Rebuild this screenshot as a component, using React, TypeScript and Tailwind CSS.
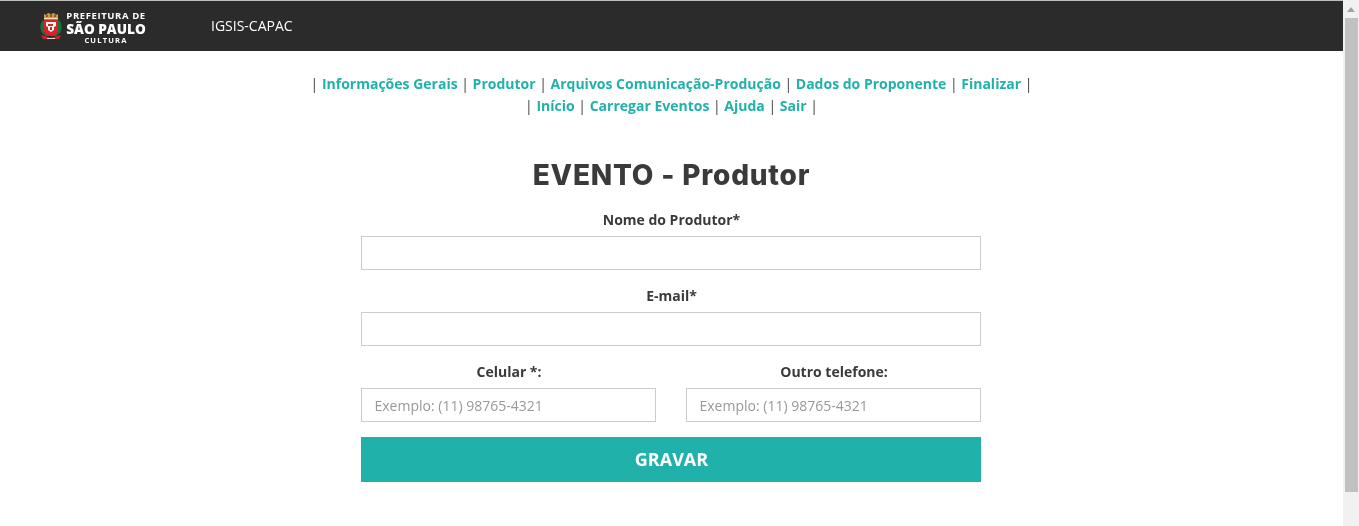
import React from 'react';

const tabs = ['Informações Gerais', 'Produtor', 'Arquivos Comunicação-Produção', 'Dados do Proponente', 'Finalizar'];
const links = ['Início', 'Carregar Eventos', 'Ajuda', 'Sair'];

const NavRow = ({ items }: { items: string[] }) => (
  <p className="h-[22px] leading-[22px]">
    |{' '}
    {items.map((item) => (
      <React.Fragment key={item}>
        <a className="font-bold text-[#20b2aa]">{item}</a> |{' '}
      </React.Fragment>
    ))}
  </p>
);

// brasao simplificado: coroa, ramos verdes, escudo vermelho e fita
const Crest = () => (
  <svg width="22" height="28" viewBox="0 0 22 28" className="shrink-0">
    <path d="M4 7V2l2 1 2-2 3 1 3-1 2 2 2-1v5z" fill="#c9a23f" />
    <path d="M6 3h2v2H6zM10 2h2v3h-2zM14 3h2v2h-2z" fill="#8f5a22" />
    <path d="M4 6h14v1.500H4z" fill="#efe3b0" />
    <path d="M3 8C0 11-.5 17 2 21l4 3h10l4-3c2.500-4 2-10-1-13l-1 1v12H4V9z" fill="#17733a" />
    <path d="M4 8h14v11c0 2.500-3 4-7 5-4-1-7-2.500-7-5z" fill="#d9222a" />
    <path d="M6 10h10v4l-2 1v3l-3 2-3-2v-3l-2-1z" fill="#f5f5f5" />
    <path d="M8 12h5v2H8zM10 15h2v3h-2z" fill="#d9222a" />
    <path d="M1 23l4 1 6 2 6-2 4-1-2 4H3z" fill="#c9242b" />
    <path d="M7 26h8v1H7z" fill="#f0d0d0" />
  </svg>
);

const Field = ({ label, placeholder }: { label: string; placeholder?: string }) => (
  <div className="flex-1">
    <label className="block h-[22px] pl-[1px] text-center font-bold leading-[22px] text-[#3a3a3a]">{label}</label>
    <input
      type="text"
      placeholder={placeholder}
      className="mt-[5px] block h-[34px] w-full border border-[#ccc] bg-white pl-[12.500px] pr-3 text-[14px] text-[#555] outline-none placeholder:text-[#999]"
    />
  </div>
);

export default function App() {
  return (
    <div className="flex h-[526px] overflow-hidden font-['Open_Sans',sans-serif] text-[14px] text-[#444] [will-change:transform]">
      <div className="min-w-0 flex-1">
        <header className="flex h-[51px] items-center border-t border-[#bdbdbd] bg-[#2b2b2b] pl-[40px]">
          <Crest />
          <div className="ml-[4px] flex w-[80px] flex-col items-center pt-[2px] text-white">
            <span className="text-[9.500px] font-bold leading-[9px] tracking-[0.6px] whitespace-nowrap">PREFEITURA DE</span>
            <span className="mt-[2px] text-[13.600px] font-extrabold leading-[14px] whitespace-nowrap">SÃO PAULO</span>
            <span className="text-[7.500px] font-bold leading-[8px] tracking-[1.200px]">CULTURA</span>
          </div>
          <span className="ml-[65px] pb-[2px] text-[14px] text-white">IGSIS-CAPAC</span>
        </header>

        <main className="flex flex-col items-center">
          <nav className="mt-[22px] text-center">
            <NavRow items={tabs} />
            <NavRow items={links} />
          </nav>

          <h1 className="mt-[38px] h-[40px] font-['Inter',sans-serif] text-[28px] font-extrabold leading-[40px] tracking-[0.800px] text-[#3a3a3a]">
            EVENTO - Produtor
          </h1>

          <form className="ml-[-1px] mt-[14px] flex w-[620px] flex-col">
            <Field label="Nome do Produtor*" />
            <div className="mt-[15px]">
              <Field label="E-mail*" />
            </div>
            <div className="mt-[15px] flex gap-[30px]">
              <Field label="Celular *:" placeholder="Exemplo: (11) 98765-4321" />
              <Field label="Outro telefone:" placeholder="Exemplo: (11) 98765-4321" />
            </div>
            <button
              type="button"
              className="mt-[15px] h-[45px] w-full bg-[#20b2aa] pl-[1px] text-[18px] font-bold text-white"
            >
              GRAVAR
            </button>
          </form>
        </main>
      </div>

      <div className="flex w-[16px] shrink-0 flex-col bg-[#f1f1f1]">
        <div className="flex h-[18px] items-center justify-center">
          <svg width="8" height="5" viewBox="0 0 8 5">
            <path d="M4 0l4 5H0z" fill="#a3a3a3" />
          </svg>
        </div>
        <div className="ml-[2px] h-[474px] w-[13px] bg-[#c1c1c1]" />
      </div>
    </div>
  );
}
